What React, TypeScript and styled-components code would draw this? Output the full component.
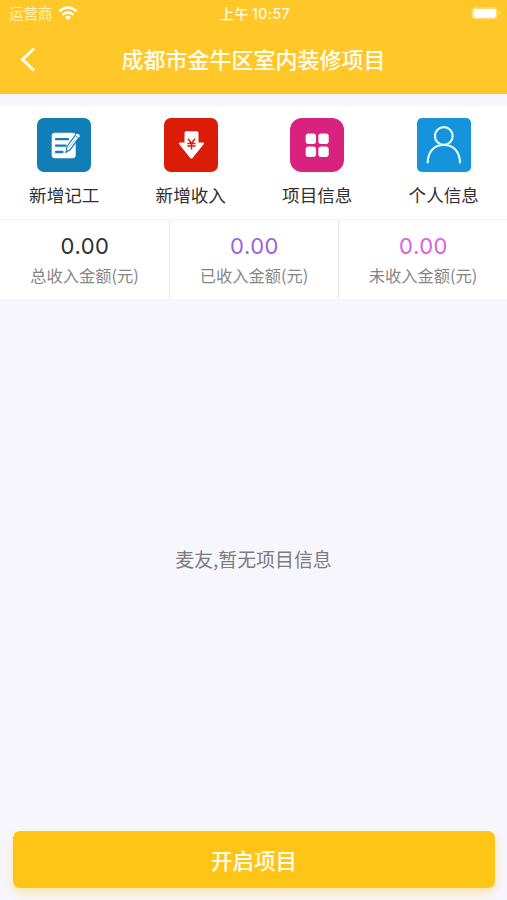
import React from "react";
import styled, { createGlobalStyle } from "styled-components";

const GlobalStyle = createGlobalStyle`
  * { box-sizing: border-box; }
  body {
    margin: 0;
    background: #f7f6fc;
    font-family: "Liberation Sans", "Noto Sans CJK SC", sans-serif;
  }
  svg { display: block; }
`;

const Screen = styled.main`
  height: 900px;
  display: flex;
  flex-direction: column;
  overflow: hidden;
  background: #f7f6fc;
`;

const StatusBar = styled.div`
  height: 27px;
  display: grid;
  grid-template-columns: 1fr auto 1fr;
  align-items: center;
  padding: 0 6px 0 9px;
  background: #ffc828;
  color: #fffbe8;
  font: 14.5px/27px Inter, "Noto Sans CJK SC", sans-serif;
`;

const Carrier = styled.div`
  display: flex;
  align-items: center;
  gap: 5px;
  color: #fff0bd;
`;

const Clock = styled.div`
  display: flex;
  gap: 3px;
  font-size: 14.2px;
  font-weight: 500;
  letter-spacing: 0.4px;
`;

const Battery = styled.div`
  display: flex;
  justify-content: flex-end;
`;

const NavBar = styled.header`
  height: 67px;
  display: grid;
  grid-template-columns: 60px 1fr 60px;
  align-items: center;
  padding-bottom: 2px;
  background: #ffc828;
`;

const BackButton = styled.button`
  display: flex;
  width: 40px;
  padding: 0 0 0 20px;
  border: 0;
  background: none;
`;

const Title = styled.h1`
  margin: 0;
  padding-bottom: 3px;
  text-align: center;
  color: #fffdf2;
  font: 500 22px/32px "Noto Sans CJK SC", sans-serif;
  white-space: nowrap;
`;

const Shortcuts = styled.nav`
  display: grid;
  grid-template-columns: repeat(4, 1fr);
  height: 114px;
  margin-top: 12px;
  padding: 12px 0 0 1px;
  background: #fff;
  border-bottom: 1px solid #f2f2f4;
`;

const Shortcut = styled.a`
  display: flex;
  flex-direction: column;
  align-items: center;
  gap: 9px;
  color: #303030;
  font: 17.6px/28px "Noto Sans CJK SC", sans-serif;
`;

const IconTile = styled.span<{ $color: string; $radius: number }>`
  width: 54px;
  height: 54px;
  border-radius: ${(p) => p.$radius}px;
  background: ${(p) => p.$color};
`;

const Stats = styled.section`
  display: grid;
  grid-template-columns: repeat(3, 1fr);
  height: 79px;
  background: #fff;
`;

const Stat = styled.div`
  display: flex;
  flex-direction: column;
  align-items: center;
  padding-top: 12px;
  & + & { border-left: 1px solid #e8e8eb; }
`;

const Amount = styled.strong<{ $color: string }>`
  color: ${(p) => p.$color};
  font: 400 22px/28px Inter, sans-serif;
  letter-spacing: 0.5px;
  padding-left: 1px;
`;

const StatLabel = styled.span`
  margin-top: 3px;
  color: #858585;
  font: 16.3px/24px "Noto Sans CJK SC", sans-serif;
`;

const EmptyState = styled.section`
  flex: 1;
  display: flex;
  justify-content: center;
  align-items: center;
  padding-bottom: 12px;
  color: #7b7b80;
  font: 18.9px/28px "Noto Sans CJK SC", sans-serif;
`;

const Footer = styled.footer`
  padding: 0 12px 12px 13px;
`;

const StartButton = styled.button`
  display: block;
  width: 100%;
  height: 57px;
  padding: 0;
  border: 0;
  border-radius: 7px;
  background: #ffc516;
  box-shadow: 0 5px 10px rgba(255, 197, 22, 0.34);
  color: #fffdf0;
  font: 500 21.5px/55px "Noto Sans CJK SC", sans-serif;
`;

const WifiIcon = () => (
  <svg width="20" height="15" viewBox="0 0 20 15" fill="none" stroke="#fff" strokeWidth="2.4">
    <path d="M1.3 5.4Q10-2.2 18.7 5.4M4.5 8.8Q10 4.2 15.5 8.8" />
    <path d="M6.9 11.1Q10 8.6 13.1 11.1L10 14.3Z" fill="#fff" stroke="none" />
  </svg>
);

const BatteryIcon = () => (
  <svg width="30" height="14" viewBox="0 0 30 14">
    <rect x="0.7" y="0.2" width="26" height="12" rx="3.5" fill="#ffdc70" />
    <rect x="2.6" y="2" width="22.3" height="8.7" rx="2" fill="#fff" />
    <path d="M28 4Q30 6.2 28 8.5Z" fill="#ffe391" />
  </svg>
);

const BackIcon = () => (
  <svg width="16" height="25" viewBox="0 0 16 25" fill="none" stroke="#fffdf2" strokeWidth="3">
    <path d="M14 1.5L2.5 12.5L14 23.5" />
  </svg>
);

const NoteIcon = () => (
  <svg viewBox="0 0 54 54">
    <rect x="14.7" y="14.7" width="24" height="25.5" rx="3.2" fill="#fff" />
    <path d="M19 21.2H31M19 27.7H28.5M19 34H25.5" stroke="#117eb7" strokeWidth="2.3" strokeLinecap="round" />
    <path d="M30 28.5L38.4 17.2L41.8 19.8L33.6 31.2L29 34.2Z" fill="#fff" stroke="#117eb7" strokeWidth="1.2" />
    <path d="M38.4 17.2L39.7 15.7Q41.7 15.5 43 18L41.8 19.8Z" fill="#fff" />
    <path d="M32 29.5L37.8 21.8" stroke="#75b5d6" strokeWidth="0.8" />
  </svg>
);

const IncomeIcon = () => (
  <svg viewBox="0 0 54 54">
    <path d="M22 13.3H33Q34.5 13.3 34.5 15V24.5H38.5Q41 24.5 39.4 26.6L28.8 39.7Q27.4 41.4 26 39.7L15.4 26.6Q13.8 24.5 16.5 24.5H20.5V15Q20.5 13.3 22 13.3Z" fill="#fff" />
    <path d="M24 20.8L27.5 25.2L31 20.8M23.4 25.4H31.6M23.4 28.1H31.6M27.5 25.2V31.6" stroke="#da1c08" strokeWidth="1.5" fill="none" />
  </svg>
);

const GridIcon = () => (
  <svg viewBox="0 0 54 54" fill="#fff">
    <rect x="15.7" y="15.5" width="10.3" height="10.5" rx="2.7" />
    <rect x="28.4" y="15.5" width="10.3" height="10.5" rx="2.7" />
    <rect x="15.7" y="28.4" width="10.3" height="10.5" rx="2.7" />
    <rect x="28.4" y="28.4" width="10.3" height="10.5" rx="2.7" />
  </svg>
);

const PersonIcon = () => (
  <svg viewBox="0 0 54 54" fill="none" stroke="#e0faff" strokeWidth="2.2" strokeLinecap="round">
    <circle cx="26.8" cy="18" r="8.9" />
    <path d="M10.7 44.5C11 32.3 18 27 26.8 27S42.7 32.3 43 44.5" />
  </svg>
);

const shortcuts = [
  { label: "新增记工", color: "#117eb7", radius: 7, Icon: NoteIcon },
  { label: "新增收入", color: "#da1c08", radius: 7, Icon: IncomeIcon },
  { label: "项目信息", color: "#d7237f", radius: 12, Icon: GridIcon },
  { label: "个人信息", color: "#1594db", radius: 5, Icon: PersonIcon },
];

const stats = [
  { label: "总收入金额(元)", color: "#303030" },
  { label: "已收入金额(元)", color: "#a15fe2" },
  { label: "未收入金额(元)", color: "#dc60df" },
];

export default function App() {
  return (
    <>
      <GlobalStyle />
      <Screen>
        <StatusBar>
          <Carrier><span>运营商</span><WifiIcon /></Carrier>
          <Clock><span>上午</span><span>10:57</span></Clock>
          <Battery><BatteryIcon /></Battery>
        </StatusBar>
        <NavBar>
          <BackButton aria-label="返回"><BackIcon /></BackButton>
          <Title>成都市金牛区室内装修项目</Title>
        </NavBar>
        <Shortcuts>
          {shortcuts.map(({ label, color, radius, Icon }) => (
            <Shortcut key={label}>
              <IconTile $color={color} $radius={radius}><Icon /></IconTile>
              <span>{label}</span>
            </Shortcut>
          ))}
        </Shortcuts>
        <Stats>
          {stats.map(({ label, color }) => (
            <Stat key={label}>
              <Amount $color={color}>0.00</Amount>
              <StatLabel>{label}</StatLabel>
            </Stat>
          ))}
        </Stats>
        <EmptyState>麦友,暂无项目信息</EmptyState>
        <Footer><StartButton>开启项目</StartButton></Footer>
      </Screen>
    </>
  );
}
